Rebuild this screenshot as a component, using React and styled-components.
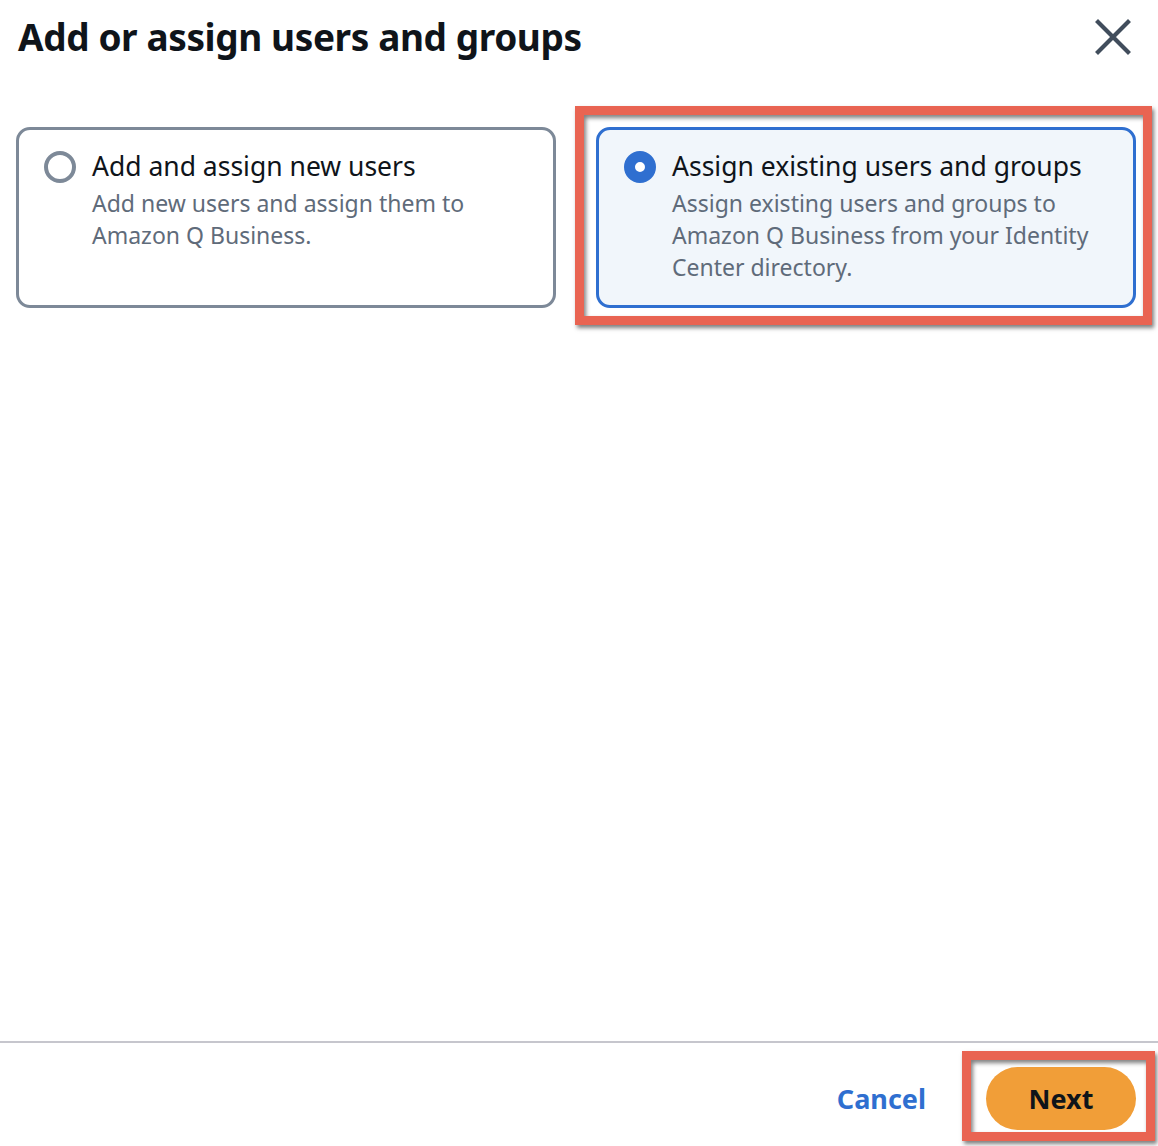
import styled, { createGlobalStyle } from "styled-components";

const GlobalStyle = createGlobalStyle`
    html, body {
        margin: 0;
        padding: 0;
        background: #ffffff;
    }
    body {
        font-family: "Noto Sans", "Open Sans", sans-serif;
        color: #0f141a;
    }
`;

export default function App() {
    // Opções do modal
    const options = [
        {
            id: "new",
            title: "Add and assign new users",
            text: "Add new users and assign them to Amazon Q Business.",
            selected: false,
        },
        {
            id: "existing",
            title: "Assign existing users and groups",
            text: "Assign existing users and groups to Amazon Q Business from your Identity Center directory.",
            selected: true,
        },
    ];

    return (
        <>
            <GlobalStyle />
            <Modal>
                <Header>
                    <Title>Add or assign users and groups</Title>
                    <CloseButton aria-label="Close">
                        <svg width="38" height="38" viewBox="0 0 38 38">
                            <path d="M4 4 L34 34 M34 4 L4 34" stroke="#414d5c" strokeWidth="4.2" strokeLinecap="square" fill="none" />
                        </svg>
                    </CloseButton>
                </Header>
                <Tiles>
                    {options.map((option) => (
                        <Tile key={option.id} $selected={option.selected}>
                            <Radio $selected={option.selected} />
                            <TileText>
                                <TileTitle>{option.title}</TileTitle>
                                <TileDescription>{option.text}</TileDescription>
                            </TileText>
                        </Tile>
                    ))}
                </Tiles>
                <Footer>
                    <CancelButton>Cancel</CancelButton>
                    <NextButton>Next</NextButton>
                </Footer>
            </Modal>
        </>
    );
}

const Modal = styled.div`
    width: 1158px;
    height: 1146px;
    display: flex;
    flex-direction: column;
    box-sizing: border-box;
    overflow: hidden;
`;

const Header = styled.div`
    display: flex;
    justify-content: space-between;
    align-items: center;
    padding: 8px 26px 0 18px;
    height: 64px;
    box-sizing: border-box;
`;

const Title = styled.h1`
    margin: 0;
    font-size: 37px;
    font-weight: 700;
    letter-spacing: -0.4px;
    color: #0f141a;
`;

const CloseButton = styled.button`
    border: none;
    background: none;
    padding: 0;
    margin-top: 2px;
    width: 38px;
    height: 38px;
    cursor: pointer;
`;

const Tiles = styled.div`
    display: grid;
    grid-template-columns: 1fr 1fr;
    gap: 40px;
    padding: 63px 22px 0 16px;
`;

const Tile = styled.label`
    position: relative;
    display: flex;
    align-items: flex-start;
    gap: 16px;
    height: 181px;
    box-sizing: border-box;
    padding: 17px 20px 20px 25px;
    border: 3px solid ${(p) => (p.$selected ? "#2f6fd0" : "#7d8998")};
    border-radius: 14px;
    background: ${(p) => (p.$selected ? "#f1f6fb" : "#ffffff")};

    ${(p) =>
        p.$selected &&
        `
        &::after {
            content: "";
            position: absolute;
            top: -24px;
            left: -24px;
            right: -19px;
            bottom: -20px;
            border: 9px solid #e96452;
            box-shadow: 2px 3px 4px rgba(0, 0, 0, 0.5), inset 2px 3px 4px rgba(0, 0, 0, 0.5);
            pointer-events: none;
        }
    `}
`;

const Radio = styled.span`
    flex: none;
    width: 32px;
    height: 32px;
    margin-top: 4px;
    box-sizing: border-box;
    border-radius: 50%;
    border: ${(p) => (p.$selected ? "11px solid #2f6fd0" : "4px solid #7d8998")};
    background: #ffffff;
`;

const TileText = styled.div`
    display: flex;
    flex-direction: column;
`;

const TileTitle = styled.span`
    font-size: 26.5px;
    line-height: 38px;
    color: #0f141a;
`;

const TileDescription = styled.span`
    margin-top: 2px;
    font-size: 23px;
    line-height: 32px;
    color: #5f6b7a;
`;

const Footer = styled.div`
    margin-top: auto;
    height: 105px;
    box-sizing: border-box;
    border-top: 2px solid #c6c6cd;
    display: flex;
    justify-content: flex-end;
    align-items: center;
    gap: 60px;
    padding: 7px 22px 0 0;
`;

const CancelButton = styled.button`
    border: none;
    background: none;
    padding: 0;
    font-family: inherit;
    font-size: 27px;
    font-weight: 700;
    color: #2f6fd0;
    cursor: pointer;
`;

const NextButton = styled.button`
    position: relative;
    width: 150px;
    height: 63px;
    border: none;
    border-radius: 32px;
    background: #f19e38;
    font-family: inherit;
    font-size: 27px;
    font-weight: 700;
    color: #0f141a;
    cursor: pointer;

    &::after {
        content: "";
        position: absolute;
        top: -16px;
        left: -24px;
        right: -19px;
        bottom: -11px;
        border: 9px solid #e96452;
        box-shadow: 2px 3px 4px rgba(0, 0, 0, 0.5), inset 2px 3px 4px rgba(0, 0, 0, 0.5);
        pointer-events: none;
    }
`;
